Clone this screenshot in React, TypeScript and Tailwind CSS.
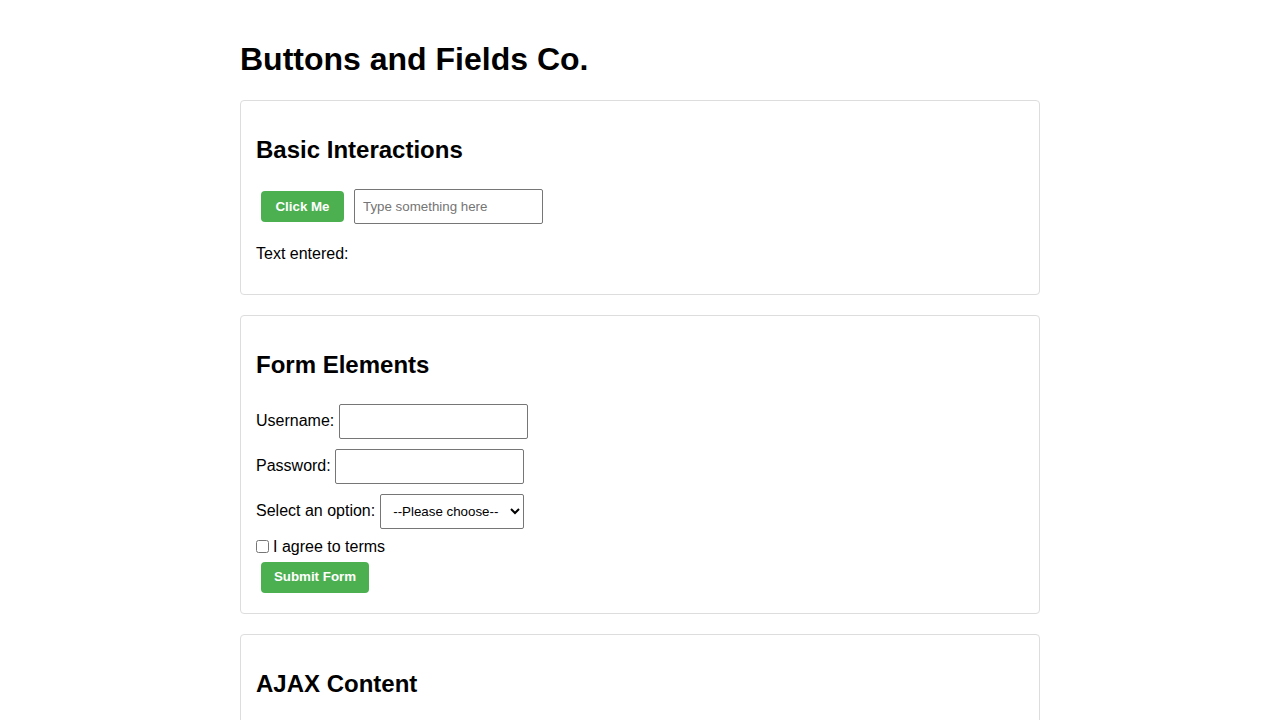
import { useState } from "react";

export default function App() {
  const [text, setText] = useState("");

  return (
    <div className="min-h-screen bg-white p-5 font-['Liberation_Sans',Arial,sans-serif] text-black">
      <div className="mx-auto max-w-[800px]">
        <h1 className="my-[21.44px] text-[32px] font-bold leading-[37px]">
          Buttons and Fields Co.
        </h1>

        {/* --- Basic Interactions --- */}
        <section className="mb-5 rounded-[4px] border border-[#ddd] p-[15px]">
          <h2 className="my-[19.92px] text-[24px] font-bold leading-[27.6px]">
            Basic Interactions
          </h2>
          <div className="flex items-center pt-px">
            <button className="m-[5px] h-[31px] w-[83px] rounded-[4px] bg-[#4CAF50] text-[13.33px] font-bold text-white">
              Click Me
            </button>
            <input
              type="text"
              value={text}
              onChange={(e) => setText(e.target.value)}
              placeholder="Type something here"
              className="m-[5px] h-[35px] w-[189px] rounded-[2px] border border-[#767676] px-2 text-[13.33px] placeholder-[#757575]"
            />
          </div>
          <p className="my-4 text-base leading-[18px]">Text entered: {text}</p>
        </section>

        {/* --- Form Elements --- */}
        <section className="mb-5 rounded-[4px] border border-[#ddd] p-[15px]">
          <h2 className="my-[19.92px] text-[24px] font-bold leading-[27.6px]">
            Form Elements
          </h2>
          <form onSubmit={(e) => e.preventDefault()}>
            <div className="flex items-center text-base">
              <label htmlFor="username">Username:</label>
              <input
                id="username"
                type="text"
                className="my-[5px] ml-[5px] h-[35px] w-[189px] rounded-[2px] border border-[#767676] px-2 text-[13.33px]"
              />
            </div>
            <div className="flex items-center text-base">
              <label htmlFor="password">Password:</label>
              <input
                id="password"
                type="password"
                className="my-[5px] ml-[4px] h-[35px] w-[189px] rounded-[2px] border border-[#767676] px-2 text-[13.33px]"
              />
            </div>
            <div className="flex items-center text-base">
              <label htmlFor="option">Select an option:</label>
              <select
                id="option"
                className="my-[5px] ml-[5px] h-[35px] w-[144px] rounded-[2px] border border-[#767676] bg-white px-2 text-[13.33px]"
              >
                <option>--Please choose--</option>
                <option>Option 1</option>
                <option>Option 2</option>
              </select>
            </div>
            <div className="mt-1 flex h-[18px] items-center text-base">
              <input id="terms" type="checkbox" className="m-0 mr-[4px] h-[13px] w-[13px]" />
              <label htmlFor="terms">I agree to terms</label>
            </div>
            <button
              type="submit"
              className="mx-[5px] mb-[5px] mt-[6px] h-[31px] w-[108px] rounded-[4px] bg-[#4CAF50] text-[13.33px] font-bold text-white"
            >
              Submit Form
            </button>
          </form>
        </section>

        {/* --- AJAX Content --- */}
        <section className="mb-5 rounded-[4px] border border-[#ddd] p-[15px]">
          <h2 className="my-[19.92px] text-[24px] font-bold leading-[27.6px]">
            AJAX Content
          </h2>
          <div className="h-[80px]"></div>
        </section>
      </div>
    </div>
  );
}
